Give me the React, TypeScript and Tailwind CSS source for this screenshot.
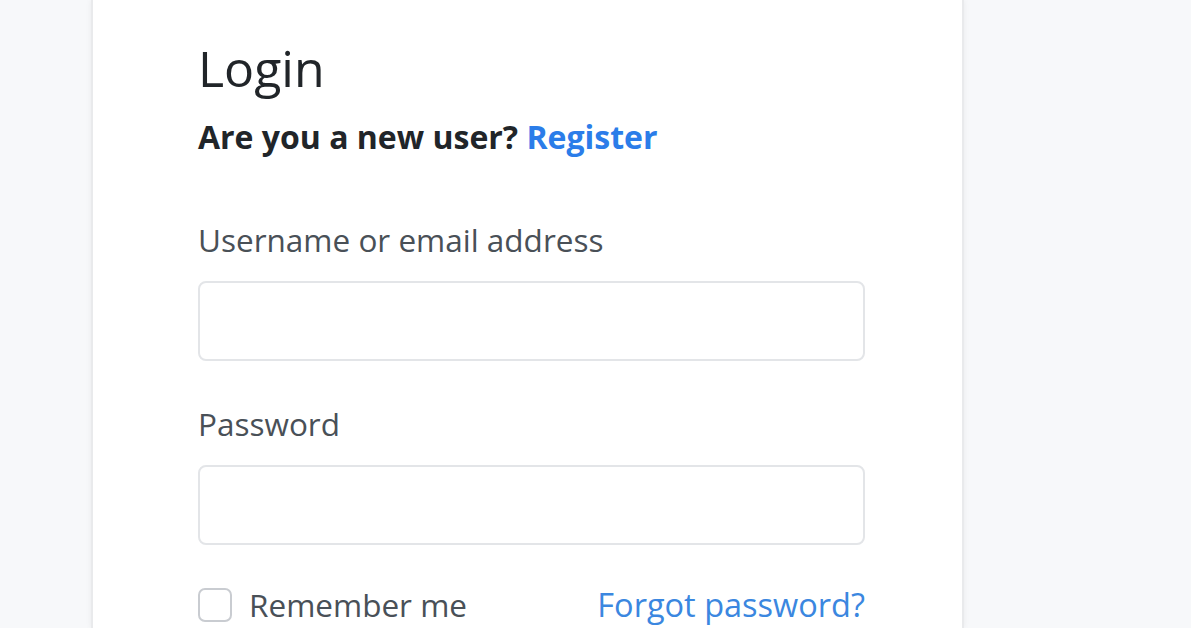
export default function App() {
  return (
    <div
      className="flex h-[628px] w-[1196px] overflow-hidden bg-[#f7f8fa]"
      style={{ fontFamily: '"Open Sans", "Noto Sans", Arial, sans-serif' }}
    >
      <div className="w-[91px] shrink-0" />
      <div className="w-[873px] shrink-0 border-x-2 border-[#e9eaec] bg-white shadow-[0_0_6px_rgba(0,0,0,0.06)]">
        <div className="ml-[105px] w-[667px] pt-[36px]">
          <h1 className="text-[50px] leading-[64px] font-normal text-[#212529]">Login</h1>
          <p className="mt-[15px] text-[32px] leading-[44px] font-bold text-[#212529]">
            Are you a new user?{' '}
            <a href="#" className="text-[#2b7de9]">
              Register
            </a>
          </p>

          <label className="mt-[61px] block text-[31.5px] leading-[40px] text-[#495057]">
            Username or email address
          </label>
          <input
            type="text"
            className="mt-[21px] block h-[80px] w-full rounded-[8px] border-2 border-[#e3e5e8] bg-white"
          />

          <label className="mt-[43px] block text-[31.5px] leading-[40px] text-[#495057]">Password</label>
          <input
            type="password"
            className="mt-[21px] block h-[80px] w-full rounded-[8px] border-2 border-[#e3e5e8] bg-white"
          />

          <div className="mt-[40px] flex items-center justify-between">
            <label className="flex items-center gap-[17px] text-[31.5px] leading-[40px] text-[#495057]">
              <span className="block h-[34px] w-[34px] rounded-[7px] border-2 border-[#c9ccd1] bg-white" />
              Remember me
            </label>
            <a href="#" className="text-[32.5px] leading-[40px] text-[#3b87e0]">
              Forgot password?
            </a>
          </div>
        </div>
      </div>
      <div className="flex-1" />
      <div className="w-[5px] bg-white" />
    </div>
  );
}
